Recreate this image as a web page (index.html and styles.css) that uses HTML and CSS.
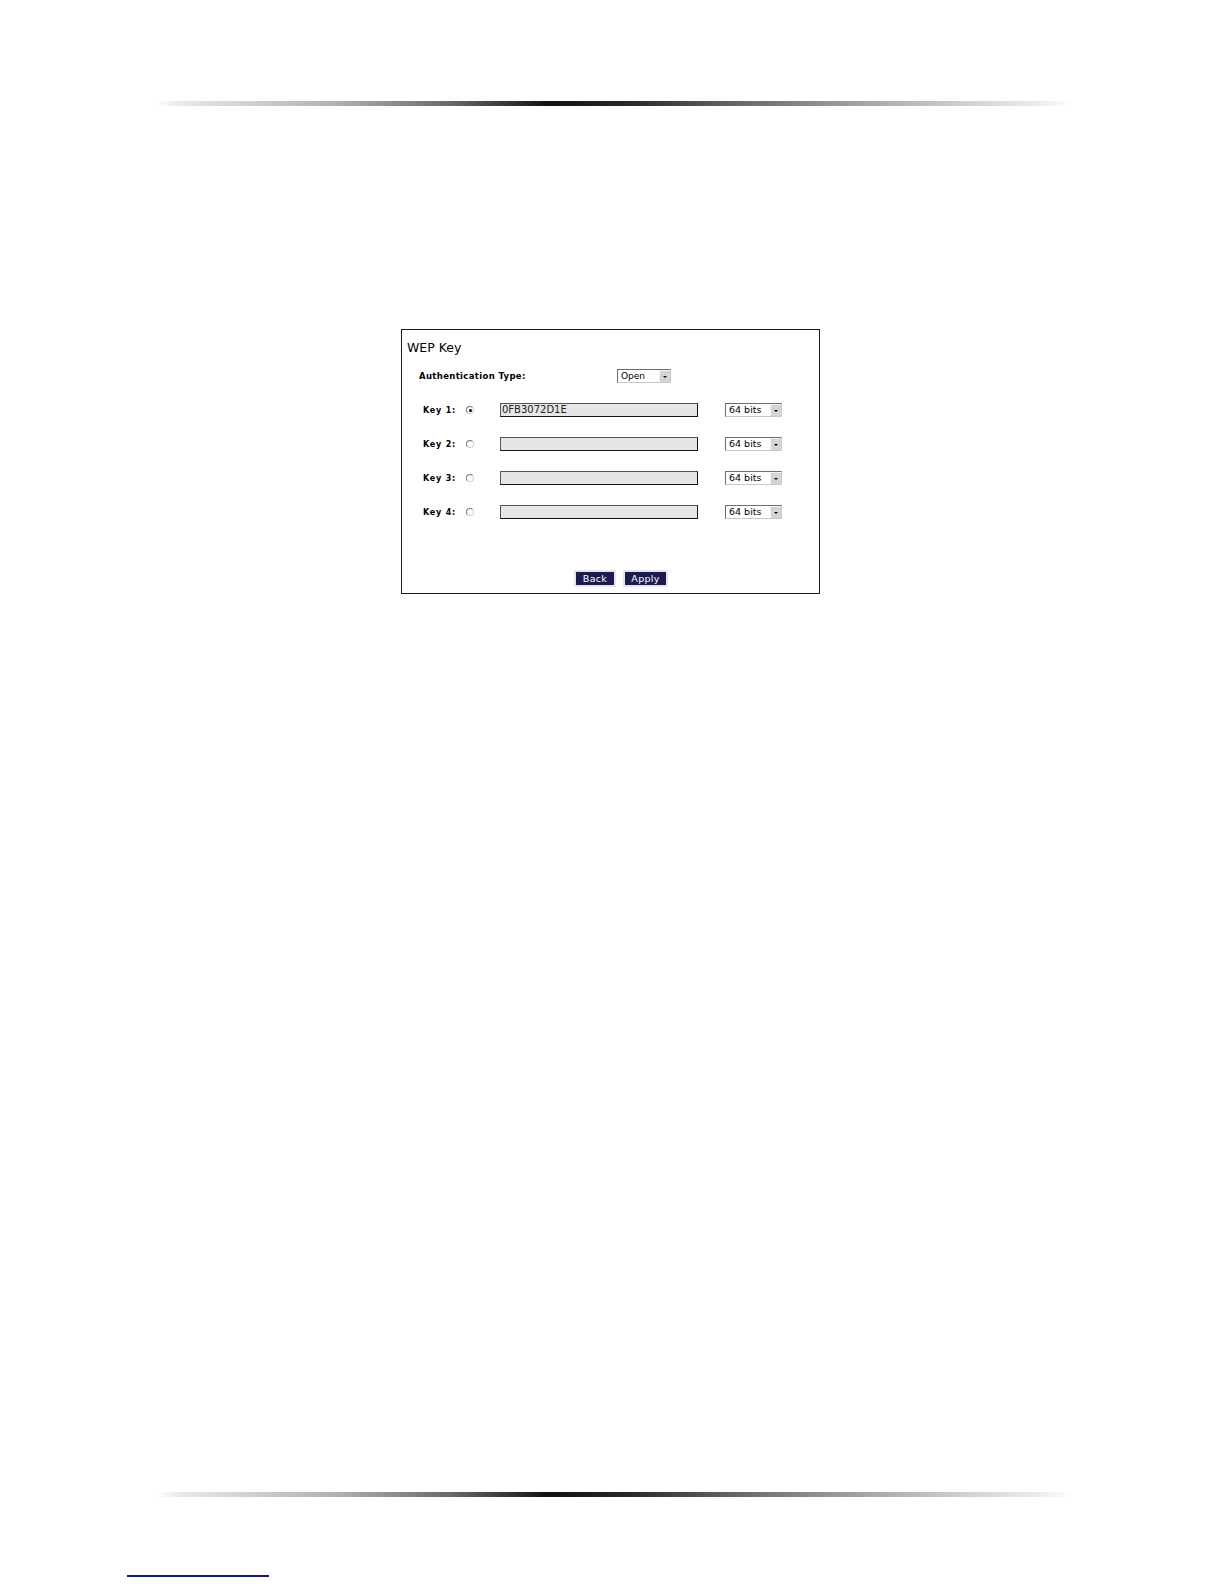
FILE: index.html
```html
<!DOCTYPE html>
<html>
<head>
<meta charset="utf-8">
<title>WEP Key</title>
<link rel="stylesheet" href="styles.css">
</head>
<body>
<div class="page">
  <div class="rule rule-top"></div>

  <div class="panel">
    <div class="panel-title">WEP Key</div>

    <div class="auth-row">
      <span class="auth-label">Authentication Type:</span>
      <span class="select select-auth"><span class="select-value">Open</span><span class="select-arrow"></span></span>
    </div>

    <div class="key-row">
      <span class="key-label">Key 1:</span>
      <span class="radio checked"></span>
      <span class="key-input">0FB3072D1E</span>
      <span class="select select-bits"><span class="select-value">64 bits</span><span class="select-arrow"></span></span>
    </div>
    <div class="key-row">
      <span class="key-label">Key 2:</span>
      <span class="radio"></span>
      <span class="key-input"></span>
      <span class="select select-bits"><span class="select-value">64 bits</span><span class="select-arrow"></span></span>
    </div>
    <div class="key-row">
      <span class="key-label">Key 3:</span>
      <span class="radio"></span>
      <span class="key-input"></span>
      <span class="select select-bits"><span class="select-value">64 bits</span><span class="select-arrow"></span></span>
    </div>
    <div class="key-row">
      <span class="key-label">Key 4:</span>
      <span class="radio"></span>
      <span class="key-input"></span>
      <span class="select select-bits"><span class="select-value">64 bits</span><span class="select-arrow"></span></span>
    </div>

    <div class="button-row">
      <span class="btn btn-back">Back</span>
      <span class="btn btn-apply">Apply</span>
    </div>
  </div>

  <div class="rule rule-bottom"></div>
  <div class="footer-link-line"></div>
</div>
</body>
</html>
```

FILE: styles.css
```css
html, body {
  margin: 0;
  padding: 0;
  background: #ffffff;
}

.page {
  width: 1224px;
  height: 1584px;
  padding-top: 101px;
  box-sizing: border-box;
  font-family: "DejaVu Sans", Verdana, sans-serif;
  color: #000;
}

.rule {
  height: 5px;
  margin-left: 155px;
  width: 917px;
  background: linear-gradient(to right,
    rgba(240,240,240,0) 0%,
    #e8e8e8 3%,
    #b0b0b0 20%,
    #6a6a6a 32%,
    #111111 43%,
    #2a2a2a 52%,
    #6a6a6a 64%,
    #a8a8a8 78%,
    #d6d6d6 90%,
    #eeeeee 97%,
    rgba(240,240,240,0) 100%);
}

.panel {
  margin-top: 223px;
  margin-left: 401px;
  width: 419px;
  height: 265px;
  box-sizing: border-box;
  border: 1px solid #1a1a1a;
  padding-top: 10px;
}

.panel-title {
  margin-left: 5px;
  font-size: 12.5px;
  line-height: 15px;
  height: 15px;
}

.auth-row {
  display: flex;
  align-items: center;
  height: 14px;
  margin-top: 14px;
  padding-left: 17px;
}

.auth-label {
  width: 198px;
  font-size: 8.5px;
  font-weight: bold;
  letter-spacing: 0.35px;
  white-space: nowrap;
}

.key-row {
  display: flex;
  align-items: center;
  height: 14px;
  margin-top: 20px;
  padding-left: 21px;
}

.key-row:first-of-type {
  margin-top: 19px;
}

.key-label {
  width: 43px;
  font-size: 8px;
  font-weight: bold;
  letter-spacing: 0.8px;
  white-space: nowrap;
}

.radio {
  width: 8px;
  height: 8px;
  box-sizing: border-box;
  border-radius: 50%;
  border: 1px solid #7a7a7a;
  border-right-color: #cfcfcf;
  border-bottom-color: #cfcfcf;
  background: #fff;
  margin-right: 26px;
  display: flex;
  align-items: center;
  justify-content: center;
}

.radio.checked::after {
  content: "";
  width: 3px;
  height: 3px;
  border-radius: 50%;
  background: #000;
}

.key-input {
  width: 198px;
  height: 14px;
  box-sizing: border-box;
  border: 1px solid #111;
  border-top-color: #555;
  border-left-color: #555;
  background: #e6e6e6;
  color: #222;
  font-size: 10px;
  line-height: 12px;
  padding-left: 1px;
  margin-right: 27px;
  white-space: nowrap;
}

.select {
  display: flex;
  align-items: stretch;
  height: 14px;
  box-sizing: border-box;
  border: 1px solid #c8c8c8;
  border-top-color: #6e6e6e;
  border-left-color: #6e6e6e;
  background: #fff;
}

.select-auth {
  width: 54px;
}

.select-bits {
  width: 57px;
}

.select-value {
  flex: 1;
  font-size: 9px;
  line-height: 12px;
  padding-left: 3px;
  white-space: nowrap;
  overflow: hidden;
}

.select-bits .select-value {
  font-size: 9.5px;
}

.select-arrow {
  width: 11px;
  background: #d4d4d4;
  border-left: 1px solid #f2f2f2;
  border-top: 1px solid #f2f2f2;
  box-sizing: border-box;
  display: flex;
  align-items: center;
  justify-content: center;
}

.select-arrow::after {
  content: "";
  width: 0;
  height: 0;
  border-left: 2px solid transparent;
  border-right: 2px solid transparent;
  border-top: 2px solid #000;
}

.button-row {
  display: flex;
  margin-top: 53px;
  padding-left: 174px;
  gap: 11px;
}

.btn {
  display: block;
  height: 13px;
  box-sizing: border-box;
  background: #1b1b4f;
  color: #fff;
  font-size: 9.5px;
  line-height: 13px;
  text-align: center;
  letter-spacing: 0.3px;
  box-shadow: 0 0 0 2px #e4e4f4;
}

.btn-back {
  width: 38px;
}

.btn-apply {
  width: 41px;
}

.rule-bottom {
  margin-top: 898px;
}

.footer-link-line {
  margin-top: 78px;
  margin-left: 127px;
  width: 142px;
  height: 2px;
  background: #141496;
}
```
